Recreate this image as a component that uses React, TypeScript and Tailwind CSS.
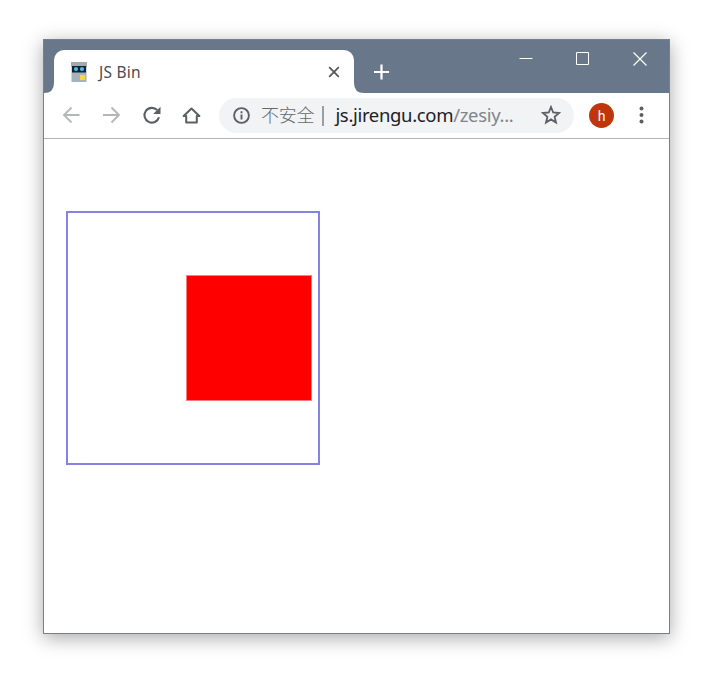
import type { ReactNode } from 'react';

function Icon({ size = 24, className = '', children }: { size?: number; className?: string; children: ReactNode }) {
  return (
    <svg width={size} height={size} viewBox={`0 0 ${size} ${size}`} fill="none" className={`shrink-0 ${className}`}>
      {children}
    </svg>
  );
}

function ToolButton({ label, children }: { label: string; children: ReactNode }) {
  return (
    <button aria-label={label} className="flex h-full w-10 items-center justify-center pb-[1px]">
      {children}
    </button>
  );
}

function Favicon() {
  return (
    <svg width="16" height="20" viewBox="0 0 16 20" className="shrink-0">
      <rect x="0" y="0" width="16" height="5" fill="#a3a9ae" />
      <rect x="0.5" y="4" width="15" height="16" fill="#a9b2b8" />
      <rect x="1" y="4" width="14" height="6.5" fill="#10232f" />
      <circle cx="5" cy="7.1" r="2.1" fill="#4bb8e6" />
      <circle cx="11" cy="7.1" r="2.1" fill="#4bb8e6" />
      <rect x="9" y="13" width="5" height="5" fill="#f7d93c" />
    </svg>
  );
}

function TitleBar() {
  return (
    <header className="flex h-[53px] bg-[#687789]">
      <svg width="10" height="53" viewBox="0 0 10 53" className="shrink-0">
        <path d="M0 53 Q10 53 10 43 V53 Z" fill="#fff" />
      </svg>
      <div className="mt-[10px] flex h-[43px] w-[300px] items-center rounded-t-[10px] bg-white pr-[14px] pl-[17px]">
        <Favicon />
        <span className="ml-3 flex-1 text-[15.5px] leading-5 tracking-[0.25px] text-[#4a4d50]">JS Bin</span>
        <Icon size={12}>
          <path d="M1.2 1.2 L10.8 10.8 M10.8 1.2 L1.2 10.8" stroke="#55585c" strokeWidth="1.8" />
        </Icon>
      </div>
      <svg width="10" height="53" viewBox="0 0 10 53" className="shrink-0">
        <path d="M10 53 Q0 53 0 43 V53 Z" fill="#fff" />
      </svg>
      <Icon size={16} className="mt-[23.5px] ml-[9px]">
        <path d="M8.5 0.5 V15.5 M1 8 H16" stroke="#fff" strokeWidth="2.2" />
      </Icon>
      <div className="mt-[12px] mr-[22px] ml-auto flex gap-[43px]">
        <Icon size={14}>
          <path d="M0.5 6.5 H13.5" stroke="#fff" />
        </Icon>
        <Icon size={14}>
          <path d="M0.5 0.5 H12.5 V12.5 H0.5 Z" stroke="#fff" />
        </Icon>
        <Icon size={14}>
          <path d="M0.5 0.5 L13.5 13.5 M13.5 0.5 L0.5 13.5" stroke="#fff" strokeWidth="1.2" />
        </Icon>
      </div>
    </header>
  );
}

function Toolbar() {
  return (
    <div className="flex h-[46px] items-center border-b border-[#b1b4b7] bg-white pl-[7px]">
      <ToolButton label="Back">
        <Icon>
          <path d="M20.5 12 H5 M12.5 4.5 L5 12 L12.5 19.5" stroke="#b4b6b9" strokeWidth="1.8" />
        </Icon>
      </ToolButton>
      <ToolButton label="Forward">
        <Icon>
          <path d="M4 12 H20 M12.5 4.5 L20 12 L12.5 19.5" stroke="#b4b6b9" strokeWidth="1.8" />
        </Icon>
      </ToolButton>
      <ToolButton label="Reload">
        <Icon>
          <path d="M18.2 7.1 A7.4 7.4 0 1 0 20 14.2" stroke="#5c5f63" strokeWidth="2.1" />
          <path d="M21.5 3.7 V11 H14.2 Z" fill="#5c5f63" />
        </Icon>
      </ToolButton>
      <ToolButton label="Home">
        <Icon>
          <path d="M4.6 13 L12.5 5.6 L20.4 13 H17.8 V19.6 H7.2 V13 Z" stroke="#5c5f63" strokeWidth="2" strokeLinejoin="round" />
        </Icon>
      </ToolButton>
      <div className="ml-[8px] flex h-[35px] w-[355px] items-center rounded-full bg-[#f1f3f5] pr-[13px] pl-[13px]">
        <Icon size={19}>
          <circle cx="9.5" cy="9.5" r="7.4" stroke="#5c5f63" strokeWidth="1.9" />
          <path d="M9.5 8.5 V13.6 M9.5 5.3 V7.2" stroke="#5c5f63" strokeWidth="1.9" />
        </Icon>
        <span className="ml-[10px] text-[18px] font-light tracking-[-0.2px] text-[#65686c]">不安全</span>
        <span className="ml-[8px] h-[20px] w-[2px] bg-[#9b9da1]" />
        <span className="mb-[2px] ml-[11px] w-[205px] text-[18.5px] leading-6 tracking-[-0.33px] whitespace-nowrap text-[#202124]">
          js.jirengu.com<span className="text-[#80858a]">/zesiy...</span>
        </span>
        <Icon size={20} className="mb-[1px] ml-auto">
          <path
            d="M10 2 L12.2 7.5 L18 8 L13.6 11.8 L15 17.5 L10 14.4 L5 17.5 L6.4 11.8 L2 8 L7.8 7.5 Z"
            stroke="#5c5f63"
            strokeWidth="1.8"
          />
        </Icon>
      </div>
      <div className="ml-[15px] flex size-[25px] items-center justify-center rounded-full bg-[#bf360c] font-[Roboto] text-[14px] leading-none text-white">
        h
      </div>
      <Icon size={18} className="mb-[1px] ml-[18px]">
        <circle cx="9.5" cy="2.5" r="2" fill="#5c5f63" />
        <circle cx="9.5" cy="9" r="2" fill="#5c5f63" />
        <circle cx="9.5" cy="15.5" r="2" fill="#5c5f63" />
      </Icon>
    </div>
  );
}

export default function App() {
  return (
    <div className="h-[678px] w-[711px] overflow-hidden bg-white pt-[39px] pl-[43px] font-['Noto_Sans','Noto_Sans_CJK_SC',sans-serif]">
      <div className="h-[595px] w-[627px] border border-[#76808c] bg-white shadow-[0_4px_18px_rgba(0,0,0,0.34)]">
        <TitleBar />
        <Toolbar />
        <main className="pt-[72px] pl-[22px]">
          <div className="flex size-[254px] items-center justify-end border-2 border-[#8583e1] pr-[6px]">
            <div className="size-[126px] border border-[#ff7b7b] bg-[#ff0000]" />
          </div>
        </main>
      </div>
    </div>
  );
}
